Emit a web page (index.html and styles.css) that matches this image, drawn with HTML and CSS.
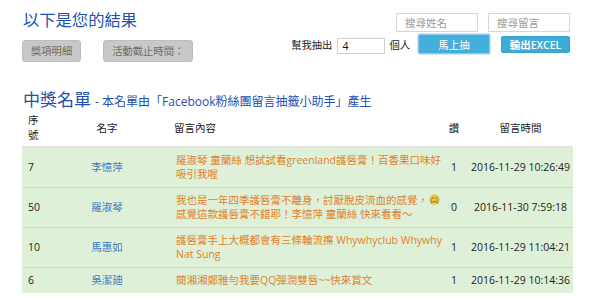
FILE: index.html
```html
<!DOCTYPE html>
<html lang="zh-Hant">
<head>
<meta charset="utf-8">
<link rel="stylesheet" href="styles.css">
</head>
<body>
<div class="page">
  <div class="top">
    <div class="top-left">
      <h1 class="title">以下是您的結果</h1>
      <div class="gbtns">
        <span class="gbtn">獎項明細</span>
        <span class="gbtn">活動截止時間：</span>
      </div>
    </div>
    <div class="top-right">
      <div class="search">
        <input class="sinput" placeholder="搜尋姓名">
        <input class="sinput" placeholder="搜尋留言">
      </div>
      <div class="draw">
        <span class="lbl">幫我抽出</span>
        <input class="num" value="4">
        <span class="lbl">個人</span>
        <button class="bbtn go">馬上抽</button>
        <button class="bbtn xls">輸出EXCEL</button>
      </div>
    </div>
  </div>

  <h2 class="list-title"><span class="big">中獎名單</span> <span class="small">- 本名單由「Facebook粉絲團留言抽籤小助手」產生</span></h2>

  <table class="tbl">
    <colgroup>
      <col class="c1"><col class="c2"><col class="c3"><col class="c4"><col class="c5">
    </colgroup>
    <thead>
      <tr>
        <th class="l">序<br>號</th>
        <th>名字</th>
        <th class="l">留言內容</th>
        <th>讚</th>
        <th>留言時間</th>
      </tr>
    </thead>
    <tbody>
      <tr>
        <td class="l">7</td>
        <td class="name">李憶萍</td>
        <td class="cmt">羅淑琴 童蘭絲 想試試看greenland護唇膏！百香果口味好<br>吸引我喔</td>
        <td>1</td>
        <td>2016-11-29 10:26:49</td>
      </tr>
      <tr>
        <td class="l">50</td>
        <td class="name">羅淑琴</td>
        <td class="cmt">我也是一年四季護唇膏不離身，討厭脫皮流血的感覺，<svg class="emo" viewBox="0 0 12 12" width="11" height="11"><circle cx="6" cy="6" r="5.6" fill="#f4c23a"/><path d="M3 4.6 L5 4.2 M9 4.6 L7 4.2" stroke="#6b4a10" stroke-width="0.9" fill="none"/><path d="M4 9 Q6 7.2 8 9" stroke="#6b4a10" stroke-width="0.9" fill="none"/><path d="M2.6 5.6 L2.6 10.5 M9.4 5.6 L9.4 10.5" stroke="#5aa9e8" stroke-width="1.6"/></svg><br>感覺這款護唇膏不錯耶！李憶萍 童蘭絲 快來看看～</td>
        <td>0</td>
        <td>2016-11-30 7:59:18</td>
      </tr>
      <tr>
        <td class="l">10</td>
        <td class="name">馬惠如</td>
        <td class="cmt">護唇膏手上大概都會有三條輪流擦 Whywhyclub Whywhy<br>Nat Sung</td>
        <td>1</td>
        <td>2016-11-29 11:04:21</td>
      </tr>
      <tr>
        <td class="l">6</td>
        <td class="name">吳潔廸</td>
        <td class="cmt">簡湘湘鄭雅勻我要QQ彈潤雙唇~~快來賞文</td>
        <td>1</td>
        <td>2016-11-29 10:14:36</td>
      </tr>
    </tbody>
  </table>
</div>
</body>
</html>
```

FILE: styles.css
```css
html, body {
  margin: 0;
  padding: 0;
  background: #fff;
}

body {
  font-family: "Open Sans", "Noto Sans CJK TC", sans-serif;
  color: #222;
  font-size: 10.5px;
}

.page {
  padding: 0 30px 0 22px;
}

.top {
  display: flex;
  justify-content: space-between;
  align-items: flex-start;
}

.title {
  margin: 10px 0 0 1px;
  font-size: 16.3px;
  line-height: 20px;
  font-weight: normal;
  color: #2150ac;
}

.gbtns {
  display: flex;
  gap: 22px;
  margin-top: 10px;
}

.gbtn {
  display: block;
  box-sizing: border-box;
  height: 22px;
  line-height: 20px;
  padding: 0 8px;
  background: #c8c8c8;
  border: 1px solid #bdbdbd;
  border-radius: 3px;
  color: #6c6c6c;
  font-size: 10.3px;
}

.top-right {
  display: flex;
  flex-direction: column;
  align-items: flex-end;
  margin-top: 13px;
}

.search {
  display: flex;
  gap: 10px;
}

.sinput {
  box-sizing: border-box;
  width: 82px;
  height: 19px;
  border: 1px solid #d6d6d6;
  padding: 0 0 0 8px;
  font-family: inherit;
  font-size: 10.5px;
  color: #555;
  outline: none;
  background: #fff;
}

.sinput::placeholder {
  color: #9a9a9a;
}

.draw {
  display: flex;
  align-items: center;
  margin-top: 2px;
  margin-right: 0;
}

.lbl {
  font-size: 10.3px;
  color: #222;
}

.num {
  box-sizing: border-box;
  width: 48px;
  height: 16px;
  margin: 4px 4px 0 5px;
  border: 1px solid #cfcfcf;
  padding: 0 0 0 4px;
  font-family: inherit;
  font-size: 10.5px;
  color: #111;
  outline: none;
}

.bbtn {
  box-sizing: border-box;
  border-radius: 2px;
  font-family: inherit;
  color: #fff;
  padding: 0;
  cursor: pointer;
}

.go {
  width: 72px;
  height: 20px;
  margin-left: 8px;
  background: #44afdb;
  border: 1px solid #8fc8f2;
  box-shadow: 0 0 0 1px #cfe6fa;
  font-size: 10.5px;
}

.xls {
  width: 69px;
  height: 17px;
  margin-left: 11px;
  background: #3eaad7;
  border: 1px solid #36a2cf;
  font-size: 10.5px;
  font-weight: 600;
}

.list-title {
  margin: 28px 0 0 1px;
  font-weight: normal;
  line-height: 20px;
  color: #2150ac;
}

.list-title .big {
  font-size: 17px;
}

.list-title .small {
  font-size: 12px;
}

.tbl {
  width: 551px;
  table-layout: fixed;
  border-collapse: collapse;
  margin-top: 0;
}

.c1 { width: 24px; }
.c2 { width: 122px; }
.c3 { width: 272px; }
.c4 { width: 28px; }
.c5 { width: 105px; }

.tbl th {
  font-weight: normal;
  font-size: 10.5px;
  line-height: 15px;
  padding: 1px 0 3px;
  color: #222;
  text-align: center;
  vertical-align: middle;
  border-bottom: 2px solid #e4e4e4;
}

.tbl td {
  background: #dff0d8;
  line-height: 14px;
  padding: 5px 0 6px;
  text-align: center;
  vertical-align: middle;
  border-top: 1px solid #d6d6d6;
  white-space: nowrap;
}

.tbl thead + tbody tr:first-child td {
  border-top: none;
}

.tbl .l {
  text-align: left;
  padding-left: 6px;
}

.tbl .name {
  color: #3b7ec3;
}

.tbl .cmt {
  text-align: left;
  padding-left: 8px;
  color: #e0822c;
  vertical-align: top;
}

.emo {
  vertical-align: -1px;
  margin-left: 1px;
}
```
